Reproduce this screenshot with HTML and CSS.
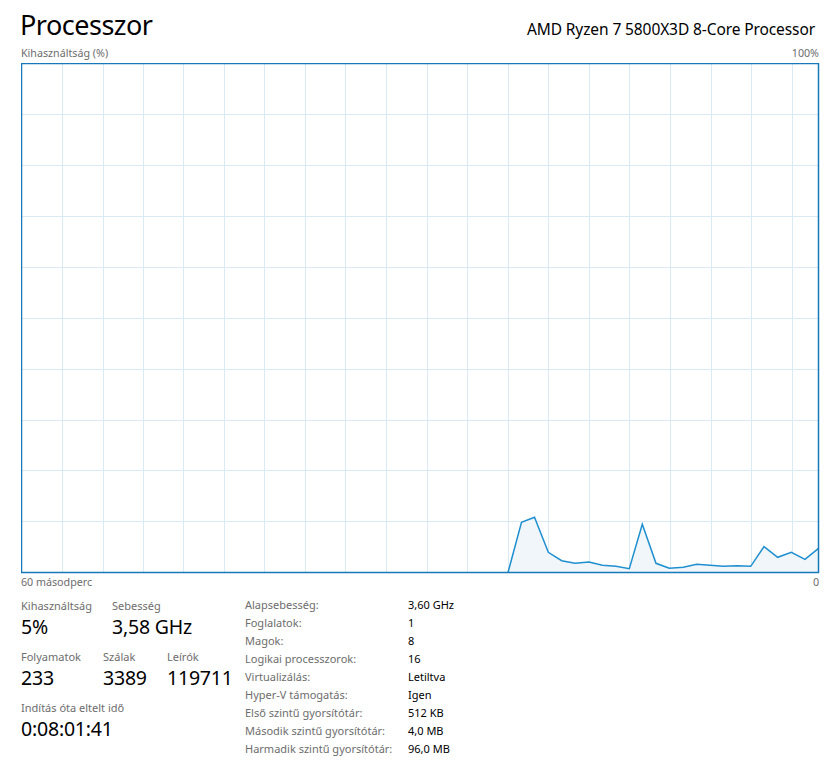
FILE: index.html
```html
<!DOCTYPE html>
<html lang="hu">
<head>
<meta charset="utf-8">
<title>Processzor</title>
<link rel="stylesheet" href="styles.css">
</head>
<body>
<div class="page">
  <header class="head">
    <h1 class="title">Processzor</h1>
    <div class="cpu">AMD Ryzen 7 5800X3D 8-Core Processor</div>
  </header>
  <div class="axis top"><span>Kihasználtság (%)</span><span>100%</span></div>
  <svg class="chart" width="799" height="511" viewBox="0 0 799 511">
    <g class="grid" stroke="#d9eaf4" stroke-width="1">
      <line x1="41.5" y1="0" x2="41.5" y2="510"/>
      <line x1="82.5" y1="0" x2="82.5" y2="510"/>
      <line x1="122.5" y1="0" x2="122.5" y2="510"/>
      <line x1="162.5" y1="0" x2="162.5" y2="510"/>
      <line x1="203.5" y1="0" x2="203.5" y2="510"/>
      <line x1="243.5" y1="0" x2="243.5" y2="510"/>
      <line x1="284.5" y1="0" x2="284.5" y2="510"/>
      <line x1="324.5" y1="0" x2="324.5" y2="510"/>
      <line x1="365.5" y1="0" x2="365.5" y2="510"/>
      <line x1="406.5" y1="0" x2="406.5" y2="510"/>
      <line x1="446.5" y1="0" x2="446.5" y2="510"/>
      <line x1="487.5" y1="0" x2="487.5" y2="510"/>
      <line x1="527.5" y1="0" x2="527.5" y2="510"/>
      <line x1="568.5" y1="0" x2="568.5" y2="510"/>
      <line x1="608.5" y1="0" x2="608.5" y2="510"/>
      <line x1="649.5" y1="0" x2="649.5" y2="510"/>
      <line x1="690.5" y1="0" x2="690.5" y2="510"/>
      <line x1="730.5" y1="0" x2="730.5" y2="510"/>
      <line x1="771.5" y1="0" x2="771.5" y2="510"/>
      <line x1="0" y1="51.5" x2="798" y2="51.5"/>
      <line x1="0" y1="102.5" x2="798" y2="102.5"/>
      <line x1="0" y1="153.5" x2="798" y2="153.5"/>
      <line x1="0" y1="204.5" x2="798" y2="204.5"/>
      <line x1="0" y1="255.5" x2="798" y2="255.5"/>
      <line x1="0" y1="306.5" x2="798" y2="306.5"/>
      <line x1="0" y1="357.5" x2="798" y2="357.5"/>
      <line x1="0" y1="407.5" x2="798" y2="407.5"/>
      <line x1="0" y1="458.5" x2="798" y2="458.5"/>
    </g>
    <polygon fill="#f1f6fa" points="487,509.5 500.5,459.3 513.5,454.3 527.3,489.3 540.7,497.7 554,500.3 568,499 581.3,502.3 595,503.3 608.3,505.7 621.3,461.3 635,500.3 648.3,505.3 662.3,504.3 675.7,501.3 689,502.3 702.3,503.3 716.3,502.7 729.7,503.3 743,483.7 756.7,494.3 770.3,489.3 784,496.3 797.5,485.3 797.5,509.5"/>
    <polyline fill="none" stroke="#1f8fd0" stroke-width="1.5" stroke-linejoin="miter" points="487,509.5 500.5,459.3 513.5,454.3 527.3,489.3 540.7,497.7 554,500.3 568,499 581.3,502.3 595,503.3 608.3,505.7 621.3,461.3 635,500.3 648.3,505.3 662.3,504.3 675.7,501.3 689,502.3 702.3,503.3 716.3,502.7 729.7,503.3 743,483.7 756.7,494.3 770.3,489.3 784,496.3 797.5,485.3"/>
    <rect x="0.5" y="0.5" width="797" height="509" fill="none" stroke="#1779ba" stroke-width="1.5"/>
  </svg>
  <div class="axis bottom"><span>60 másodperc</span><span>0</span></div>
  <section class="details">
    <div class="live">
      <div class="row">
        <div class="stat w91"><div class="lbl">Kihasználtság</div><div class="val">5%</div></div>
        <div class="stat"><div class="lbl">Sebesség</div><div class="val">3,58 GHz</div></div>
      </div>
      <div class="row">
        <div class="stat w82"><div class="lbl">Folyamatok</div><div class="val">233</div></div>
        <div class="stat w64"><div class="lbl">Szálak</div><div class="val">3389</div></div>
        <div class="stat"><div class="lbl">Leírók</div><div class="val">119711</div></div>
      </div>
      <div class="row">
        <div class="stat"><div class="lbl">Indítás óta eltelt idő</div><div class="val">0:08:01:41</div></div>
      </div>
    </div>
    <dl class="props">
      <dt>Alapsebesség:</dt><dd>3,60 GHz</dd>
      <dt>Foglalatok:</dt><dd>1</dd>
      <dt>Magok:</dt><dd>8</dd>
      <dt>Logikai processzorok:</dt><dd>16</dd>
      <dt>Virtualizálás:</dt><dd>Letiltva</dd>
      <dt>Hyper-V támogatás:</dt><dd>Igen</dd>
      <dt>Első szintű gyorsítótár:</dt><dd>512 KB</dd>
      <dt>Második szintű gyorsítótár:</dt><dd>4,0 MB</dd>
      <dt>Harmadik szintű gyorsítótár:</dt><dd>96,0 MB</dd>
    </dl>
  </section>
</div>
</body>
</html>
```
FILE: styles.css
```css
html, body {
  margin: 0;
  padding: 0;
  background: #ffffff;
}
body {
  font-family: "Noto Sans", "Open Sans", sans-serif;
  color: #000;
  width: 831px;
  height: 773px;
  overflow: hidden;
}
.page {
  padding: 0 12px 0 21px;
}
.head {
  display: flex;
  justify-content: space-between;
  align-items: baseline;
  height: 42px;
  padding-top: 2px;
}
.title {
  margin: 0;
  font-weight: 400;
  font-size: 27px;
  line-height: 45px;
  letter-spacing: -0.5px;
  margin-left: -1px;
}
.cpu {
  font-size: 15.5px;
  padding-right: 4px;
  letter-spacing: -0.1px;
}
.axis {
  display: flex;
  justify-content: space-between;
  font-size: 10.7px;
  color: #6d6d6d;
  width: 798px;
}
.axis.top {
  height: 19px;
  line-height: 18px;
}
.axis.bottom {
  height: 18px;
  line-height: 16px;
}
.chart {
  display: block;
}
.details {
  display: flex;
  padding-top: 4px;
}
.live {
  width: 224px;
  display: flex;
  flex-direction: column;
}
.row {
  display: flex;
  height: 51px;
}
.stat.w91 { width: 91px; }
.stat.w82 { width: 82px; }
.stat.w64 { width: 64px; }
.lbl {
  font-size: 11px;
  color: #6d6d6d;
  line-height: 19px;
}
.val {
  font-size: 19.5px;
  line-height: 24px;
  letter-spacing: -0.2px;
}
.props {
  margin: 0;
  display: grid;
  grid-template-columns: 163px auto;
  grid-auto-rows: 18px;
  font-size: 11px;
  line-height: 18px;
}
.props dt {
  color: #6d6d6d;
}
.props dd {
  margin: 0;
  color: #000;
}
```
